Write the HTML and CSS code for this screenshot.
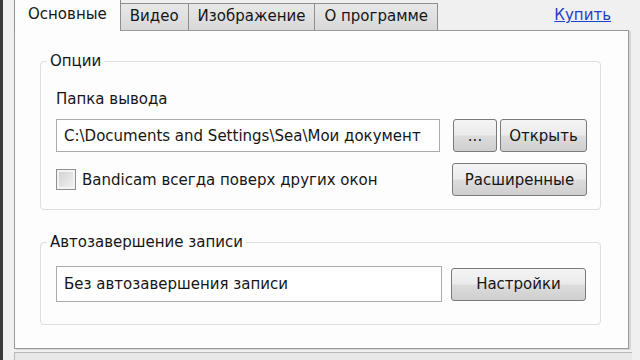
FILE: index.html
```html
<!DOCTYPE html>
<html lang="ru">
<head>
    <meta charset="UTF-8">
    <meta name="viewport" content="width=device-width, initial-scale=1.0">
    <title>Bandicam - Основные</title>
    <link rel="stylesheet" href="styles.css">
</head>
<body>
    <div class="window">
        <!-- Вкладки -->
        <div class="tabbar">
            <div class="tab active">Основные</div>
            <div class="tab">Видео</div>
            <div class="tab">Изображение</div>
            <div class="tab">О программе</div>
            <a href="#" class="buy">Купить</a>
        </div>

        <!-- Панель вкладки -->
        <div class="panel">
            <fieldset class="group">
                <legend>Опции</legend>
                <div class="label">Папка вывода</div>
                <div class="row">
                    <input type="text" class="field" value="C:\Documents and Settings\Sea\Мои документ" readonly>
                    <div class="btn-group">
                        <button class="btn small">...</button>
                        <button class="btn open">Открыть</button>
                    </div>
                </div>
                <div class="row second">
                    <label class="check-label">
                        <span class="check"></span>
                        Bandicam всегда поверх других окон
                    </label>
                    <button class="btn wide">Расширенные</button>
                </div>
            </fieldset>

            <fieldset class="group auto">
                <legend>Автозавершение записи</legend>
                <div class="row">
                    <input type="text" class="field tall" value="Без автозавершения записи" readonly>
                    <button class="btn wide">Настройки</button>
                </div>
            </fieldset>
        </div>

        <div class="footer"></div>
    </div>
</body>
</html>
```

FILE: styles.css
```css
body {
    margin: 0;
    padding: 0;
    background-color: #f0f0f0;
    font-family: "DejaVu Sans", sans-serif;
    font-size: 15px;
    color: #161616;
}
.window {
    height: 360px;
    border-left: 3px solid #3a3a3a;
    padding-left: 11px;
    box-sizing: border-box;
    overflow: hidden;
}
.tabbar {
    display: flex;
    align-items: flex-end;
    height: 30px;
}
.tab {
    position: relative;
    height: 27px;
    line-height: 25px;
    padding: 0 9px;
    border: 1px solid #8e8f8f;
    border-bottom: none;
    border-left: none;
    background: linear-gradient(#e8e8e8, #d8d8d8);
    box-sizing: border-box;
}
.tab.active {
    height: 31px;
    margin-bottom: -1px;
    line-height: 28px;
    padding: 0 13px;
    background-color: #fdfdfd;
    background-image: none;
    border-left: 1px solid #8e8f8f;
    border-top: none;
    z-index: 1;
}
.buy {
    margin-left: auto;
    margin-right: 29px;
    align-self: center;
    color: #1f3fc9;
    text-decoration: underline;
}
.panel {
    width: 615px;
    height: 319px;
    box-sizing: border-box;
    border: 1px solid #9a9a9a;
    box-shadow: 2px 1px 0 #d6d6d6;
    background-color: #fdfdfd;
    padding-top: 21px;
}
.group {
    margin: 0 27px 0 25px;
    padding: 20px 13px 13px 15px;
    border: 1px solid #d9dfe3;
    border-radius: 4px;
}
.group legend {
    padding: 0 3px;
    margin-left: -9px;
}
.group.auto {
    margin-top: 23px;
    padding: 15px 14px 22px 15px;
}
.label {
    margin-bottom: 11px;
}
.row {
    display: flex;
    align-items: center;
    justify-content: space-between;
}
.row.second {
    margin-top: 11px;
}
.field {
    width: 384px;
    height: 33px;
    box-sizing: border-box;
    border: 1px solid #a9abb0;
    background-color: #ffffff;
    padding: 0 7px;
    font-family: inherit;
    font-size: 15px;
    color: #161616;
    outline: none;
}
.field.tall {
    width: 386px;
    height: 36px;
}
.btn-group {
    display: flex;
    gap: 3px;
}
.btn {
    height: 33px;
    box-sizing: border-box;
    border: 1px solid #7a7a7a;
    border-radius: 3px;
    background: linear-gradient(#f4f4f4 0%, #ebebeb 48%, #dcdcdc 52%, #cfcfcf 100%);
    font-family: inherit;
    font-size: 15px;
    color: #161616;
    padding: 0;
}
.btn.small {
    width: 44px;
}
.btn.open {
    width: 87px;
}
.btn.wide {
    width: 135px;
}
.check-label {
    display: flex;
    align-items: center;
    gap: 6px;
}
.check {
    width: 20px;
    height: 21px;
    box-sizing: border-box;
    border: 1px solid #8e8f8f;
    box-shadow: inset 0 0 0 2px #f4f4f4;
    background: linear-gradient(135deg, #cfcfcf, #f4f4f4);
}
.footer {
    margin-top: 3px;
    height: 10px;
    border-top: 1px solid #b9b9b9;
    border-left: 1px solid #b9b9b9;
    width: 617px;
    background-color: #e8e8e8;
}
```
